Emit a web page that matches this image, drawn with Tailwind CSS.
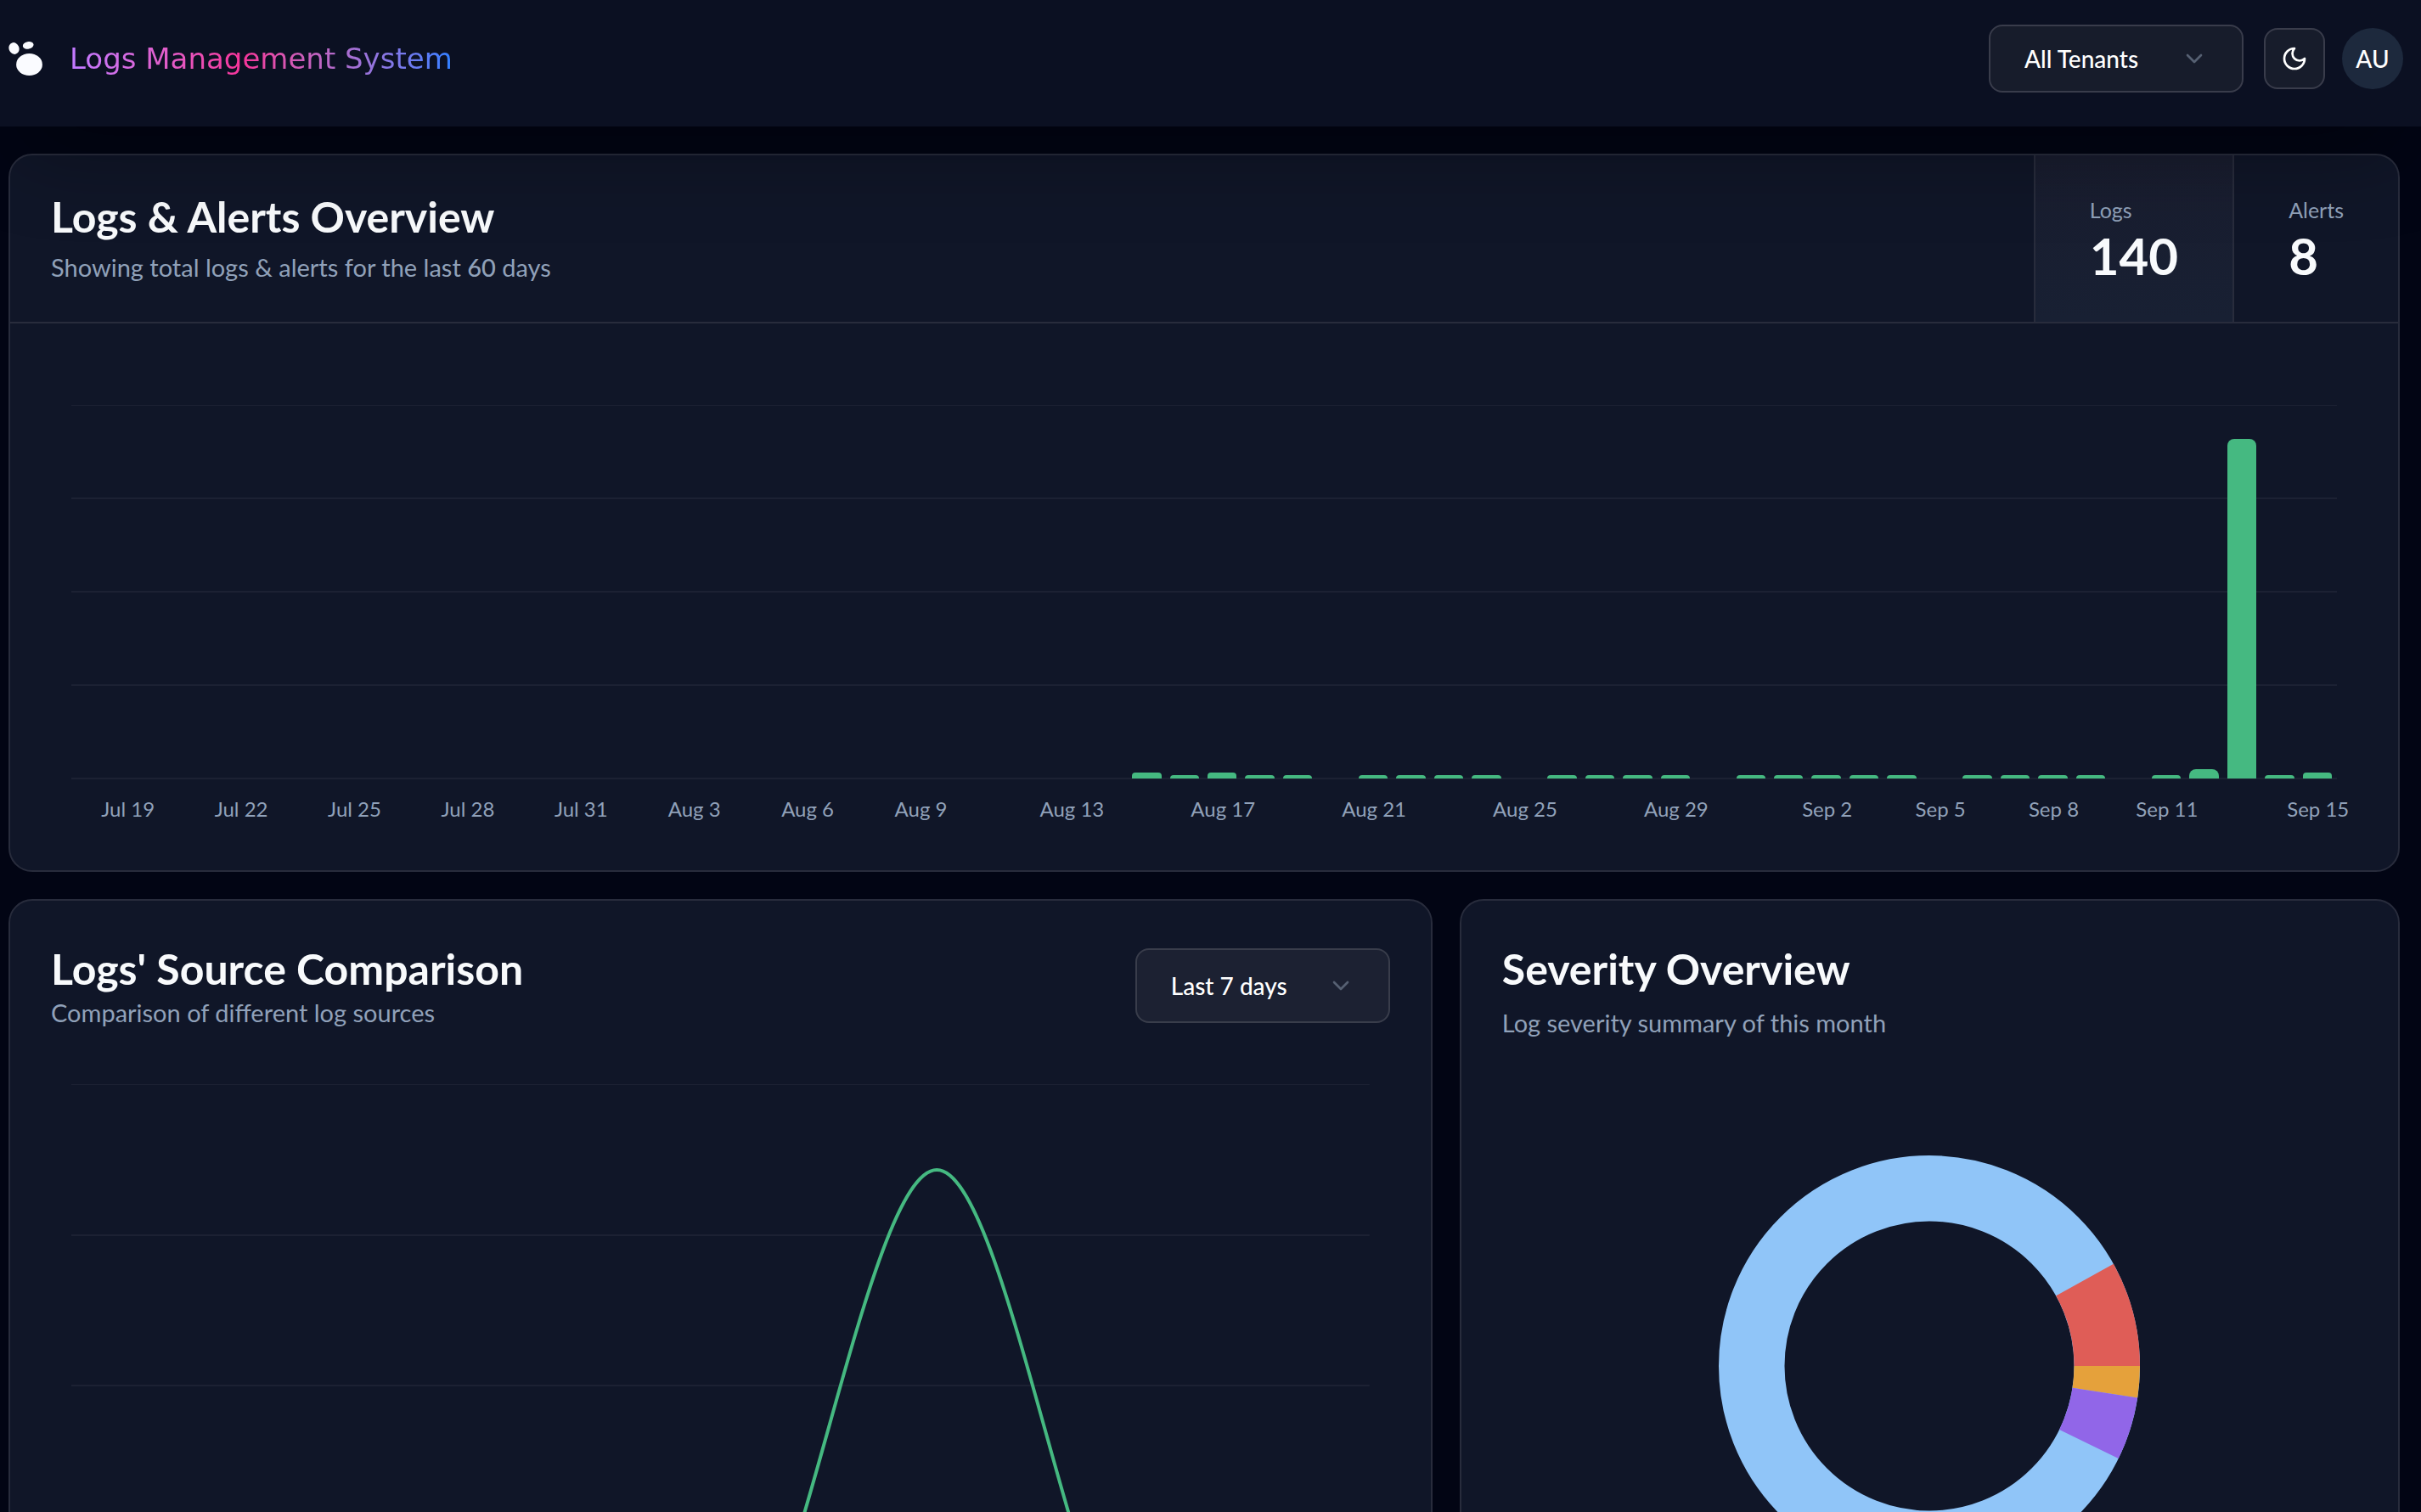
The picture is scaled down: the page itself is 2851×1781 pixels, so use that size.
<!DOCTYPE html>
<html lang="en">
<head>
<meta charset="utf-8">
<meta name="viewport" content="width=device-width, initial-scale=1">
<title>Logs Management System</title>
<script src="https://cdn.jsdelivr.net/npm/@tailwindcss/browser@4"></script>
</head>
<body class="flex h-screen flex-col overflow-hidden bg-[#020514] font-['Lato',sans-serif] text-slate-50">

<header class="relative z-10 flex shrink-0 items-center justify-between bg-[#0b1022] pt-[29px] pr-[21px] pb-10 pl-[10px] shadow-[0_50px_100px_-24px_rgb(0_0_0/0.35)]">
  <a href="#" class="flex items-center gap-8">
    <svg class="size-10" viewBox="0 0 40 40" fill="#fafbff" aria-hidden="true">
      <ellipse cx="6.5" cy="8" rx="6" ry="7" transform="rotate(-20 6.5 8)"/>
      <ellipse cx="23.2" cy="4.4" rx="6.4" ry="4.3" transform="rotate(-12 23.2 4.4)"/>
      <ellipse cx="24.5" cy="27" rx="15.4" ry="13"/>
    </svg>
    <span class="bg-gradient-to-r from-purple-400 via-pink-500 via-45% to-blue-500 bg-clip-text font-['DejaVu_Sans',sans-serif] text-[34px] leading-10 font-normal text-transparent">Logs Management System</span>
  </a>
  <div class="flex items-center">
    <div class="relative mr-6">
      <select aria-label="Tenant" class="h-20 w-[300px] appearance-none rounded-2xl border-2 border-[#393c4b] bg-[#171c2b] pl-10 text-[28px] font-medium text-white">
        <option>All Tenants</option>
      </select>
      <svg class="pointer-events-none absolute top-6 right-[42px] size-8 text-[#566072]" viewBox="0 0 24 24" fill="none" stroke="currentColor" stroke-width="2" stroke-linecap="round" stroke-linejoin="round" aria-hidden="true"><path d="m6 9 6 6 6-6"/></svg>
    </div>
    <button type="button" aria-label="Toggle theme" class="mr-5 flex size-[72px] items-center justify-center rounded-2xl border-2 border-[#393c4b] bg-[#171c2b] text-white">
      <svg class="size-8" viewBox="0 0 24 24" fill="none" stroke="currentColor" stroke-width="2" stroke-linecap="round" stroke-linejoin="round" aria-hidden="true"><path d="M12 3a6 6 0 0 0 9 9 9 9 0 1 1-9-9Z"/></svg>
    </button>
    <button type="button" aria-label="Account" class="flex size-[72px] items-center justify-center rounded-full bg-slate-800 text-[28px] leading-8 font-medium text-white">AU</button>
  </div>
</header>

<main class="flex min-h-0 flex-1 flex-col gap-8 overflow-y-auto pt-8 pr-[25px] pl-[10px] [scrollbar-width:none]">

  <section class="shrink-0 overflow-hidden rounded-[28px] border-2 border-[#282c3c] bg-[#101628]">
    <div class="flex border-b-2 border-[#282c3c]">
      <div class="flex flex-1 flex-col justify-center gap-4 px-12 pt-1">
        <h2 class="text-[50px] leading-12 font-bold">Logs &amp; Alerts Overview</h2>
        <p class="text-[29px] leading-10 text-slate-400">Showing total logs &amp; alerts for the last <span class="font-medium">60</span> days</p>
      </div>
      <button type="button" aria-pressed="true" class="flex h-[196px] flex-col items-start justify-center gap-2 border-l-2 border-[#282c3c] bg-linear-to-b from-[#191d2f] to-[#182033] px-16">
        <span class="text-[25px] leading-8 text-slate-400">Logs</span>
        <span class="text-[60px] leading-[60px] font-bold">140</span>
      </button>
      <button type="button" aria-pressed="false" class="flex h-[196px] flex-col items-start justify-center gap-2 border-l-2 border-[#282c3c] px-16">
        <span class="text-[25px] leading-8 text-slate-400">Alerts</span>
        <span class="text-[60px] leading-[60px] font-bold">8</span>
      </button>
    </div>
    <div class="px-[72px] pt-24 pb-[56px]">
      <div class="relative h-[441px]">
        <div class="absolute inset-0 flex flex-col justify-between">
          <div class="h-px bg-[#1c2133]"></div>
          <div class="h-0.5 bg-[#1c2133]"></div>
          <div class="h-0.5 bg-[#1c2133]"></div>
          <div class="h-0.5 bg-[#1c2133]"></div>
          <div class="h-0.5 bg-[#1c2133]"></div>
        </div>
        <div id="bars" class="relative grid h-[440px] grid-cols-[repeat(60,minmax(0,1fr))] items-end"></div>
      </div>
      <div id="days" class="grid grid-cols-[repeat(60,minmax(0,1fr))] pt-[19px] text-2xl leading-8 text-slate-400"></div>
    </div>
  </section>

  <div class="grid shrink-0 grid-cols-5 gap-8">
    <section class="col-span-3 rounded-[28px] border-2 border-[#282c3c] bg-[#101628] px-12 pt-14 pb-14">
      <div class="flex items-start justify-between">
        <div>
          <h2 class="text-[50px] leading-12 font-bold">Logs' Source Comparison</h2>
          <p class="pt-2 text-[29px] leading-10 text-slate-400">Comparison of different log sources</p>
        </div>
        <div class="relative">
          <select aria-label="Period" class="h-[88px] w-[300px] appearance-none rounded-2xl border-2 border-[#393d4b] bg-[#1c2132] pl-10 text-[28px] font-medium text-white">
            <option>Last 7 days</option>
          </select>
          <svg class="pointer-events-none absolute top-7 right-[42px] size-8 text-[#566072]" viewBox="0 0 24 24" fill="none" stroke="currentColor" stroke-width="2" stroke-linecap="round" stroke-linejoin="round" aria-hidden="true"><path d="m6 9 6 6 6-6"/></svg>
        </div>
      </div>
      <div class="px-6 pt-16">
        <svg class="h-[710px] w-full overflow-visible" viewBox="0 0 1528 710" preserveAspectRatio="none" fill="none" role="img" aria-label="Logs per source, last 7 days">
          <g stroke="#1c2133" stroke-width="2">
            <path stroke-width="1" d="M0 .5H1528"/>
            <path d="M0 178H1528M0 355H1528M0 532H1528M0 709H1528"/>
          </g>
          <path stroke="#45b981" stroke-width="4" vector-effect="non-scaling-stroke" d="M0 709H509C594 709 679 709 764 708C849 708 934 101 1018.7 101C1103 101 1188 710 1273 710L1528 704"/>
        </svg>
      </div>
    </section>

    <section class="col-span-2 rounded-[28px] border-2 border-[#282c3c] bg-[#101628] px-12 pt-14 pb-14">
      <h2 class="text-[50px] leading-12 font-bold">Severity Overview</h2>
      <p class="pt-5 text-[29px] leading-10 text-slate-400">Log severity summary of this month</p>
      <div class="flex justify-center pt-[136px]">
        <svg class="size-[496px]" viewBox="-248 -248 496 496" fill="none" stroke-width="77.5" role="img" aria-label="Severity share">
          <circle r="209.25" stroke="#90c5f8"/>
          <circle r="209.25" pathLength="360" stroke="#e5a13b" stroke-dasharray="8.7 351.3"/>
          <circle r="209.25" pathLength="360" stroke="#9166e8" stroke-dasharray="17.4 342.6" stroke-dashoffset="-8.7"/>
          <circle r="209.25" pathLength="360" stroke="#df5d57" stroke-dasharray="29 331" stroke-dashoffset="-331"/>
        </svg>
      </div>
    </section>
  </div>
</main>

<script>
  // Logs per day, Jul 18 – Sep 15; the vertical axis runs to 120.
  const counts = [
    ...Array(28).fill(0),
    2, 1, 2, 1, 1, 0, 1, 1, 1, 1, 0, 1, 1, 1, 1, 0,
    1, 1, 1, 1, 1, 0, 1, 1, 1, 1, 0, 1, 3, 109, 1, 2
  ];
  const labels = {
    1: 'Jul 19', 4: 'Jul 22', 7: 'Jul 25', 10: 'Jul 28', 13: 'Jul 31', 16: 'Aug 3', 19: 'Aug 6',
    22: 'Aug 9', 26: 'Aug 13', 30: 'Aug 17', 34: 'Aug 21', 38: 'Aug 25', 42: 'Aug 29',
    46: 'Sep 2', 49: 'Sep 5', 52: 'Sep 8', 55: 'Sep 11', 59: 'Sep 15'
  };
  const bars = document.getElementById('bars');
  const days = document.getElementById('days');
  counts.forEach((count, i) => {
    const bar = document.createElement('div');
    bar.className = count > 2 ? 'ml-1 mr-1.5 rounded-t-lg bg-[#45b981]' : 'ml-1 mr-1.5 rounded-t bg-[#45b981]';
    bar.style.height = (count / 120 * 100) + '%';
    bars.append(bar);
    const day = document.createElement('div');
    day.className = 'flex justify-center whitespace-nowrap';
    day.textContent = labels[i] || '';
    days.append(day);
  });
</script>
</body>
</html>
